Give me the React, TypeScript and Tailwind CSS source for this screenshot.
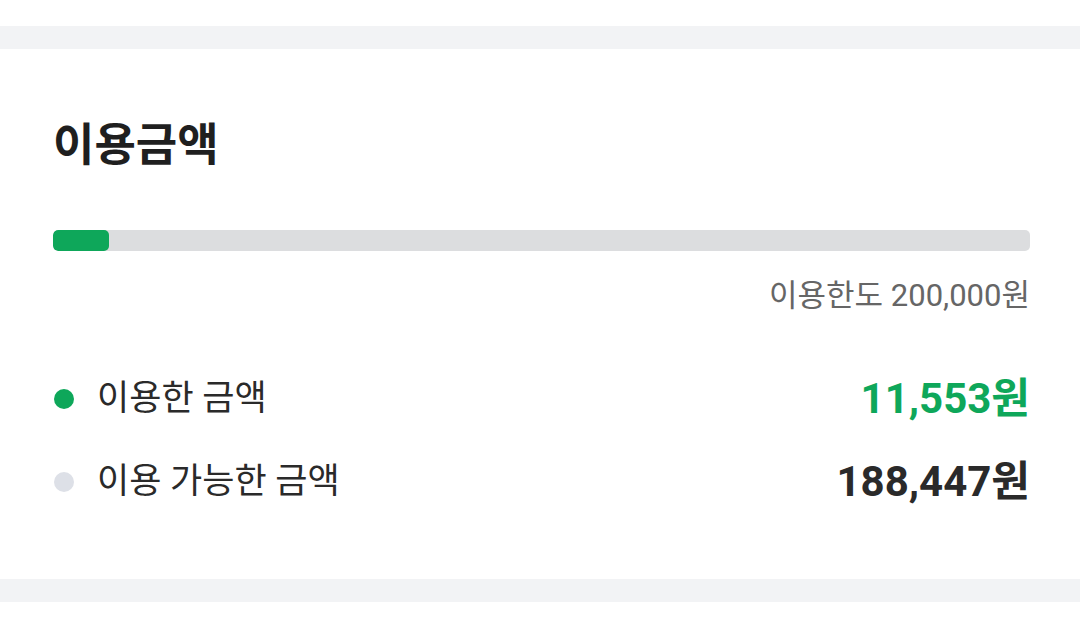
import React from 'react';

const font = { fontFamily: "Roboto, 'Noto Sans CJK KR', sans-serif" };

function Row({ dot, label, value, valueClass }: { dot: string; label: string; value: string; valueClass: string }) {
  return (
    <div className="flex items-center justify-between">
      <div className="flex items-center">
        <span className={`ml-[1px] h-5 w-5 rounded-full ${dot}`} />
        <span className="ml-[23px] text-[35px] leading-[44px] text-[#2a2a2a]">{label}</span>
      </div>
      <span className={`text-[42px] font-bold leading-[44px] ${valueClass}`}>{value}</span>
    </div>
  );
}

export default function App() {
  const used = 11553;
  const limit = 200000;
  const pct = (used / limit) * 100;

  return (
    <div className="min-h-[617px] w-[1080px] bg-white" style={font}>
      <div className="h-[26px]" />
      <div className="h-[23px] bg-[#f2f3f5]" />

      {/* 이용금액 */}
      <section className="pb-[75px] pl-[53px] pr-[50px] pt-[72px]">
        <h2 className="text-[45px] font-bold leading-[50px] text-[#1f1f1f]">이용금액</h2>

        <div className="mt-[59px] h-[21px] w-full overflow-hidden rounded-[5px] bg-[#dcdddf]">
          <div className="h-full rounded-[5px] bg-[#0ea75a]" style={{ width: `${Math.max(pct, 5.7)}%` }} />
        </div>

        <p className="mt-[28px] text-right text-[31px] leading-[34px] text-[#666666]">이용한도 200,000원</p>

        <div className="mt-[64px]">
          <Row dot="bg-[#0ea75a]" label="이용한 금액" value="11,553원" valueClass="text-[#0ea75a]" />
        </div>
        <div className="mt-[39px]">
          <Row dot="bg-[#dde0e7]" label="이용 가능한 금액" value="188,447원" valueClass="text-[#2a2a2a]" />
        </div>
      </section>

      <div className="h-[23px] bg-[#f2f3f5]" />
    </div>
  );
}
